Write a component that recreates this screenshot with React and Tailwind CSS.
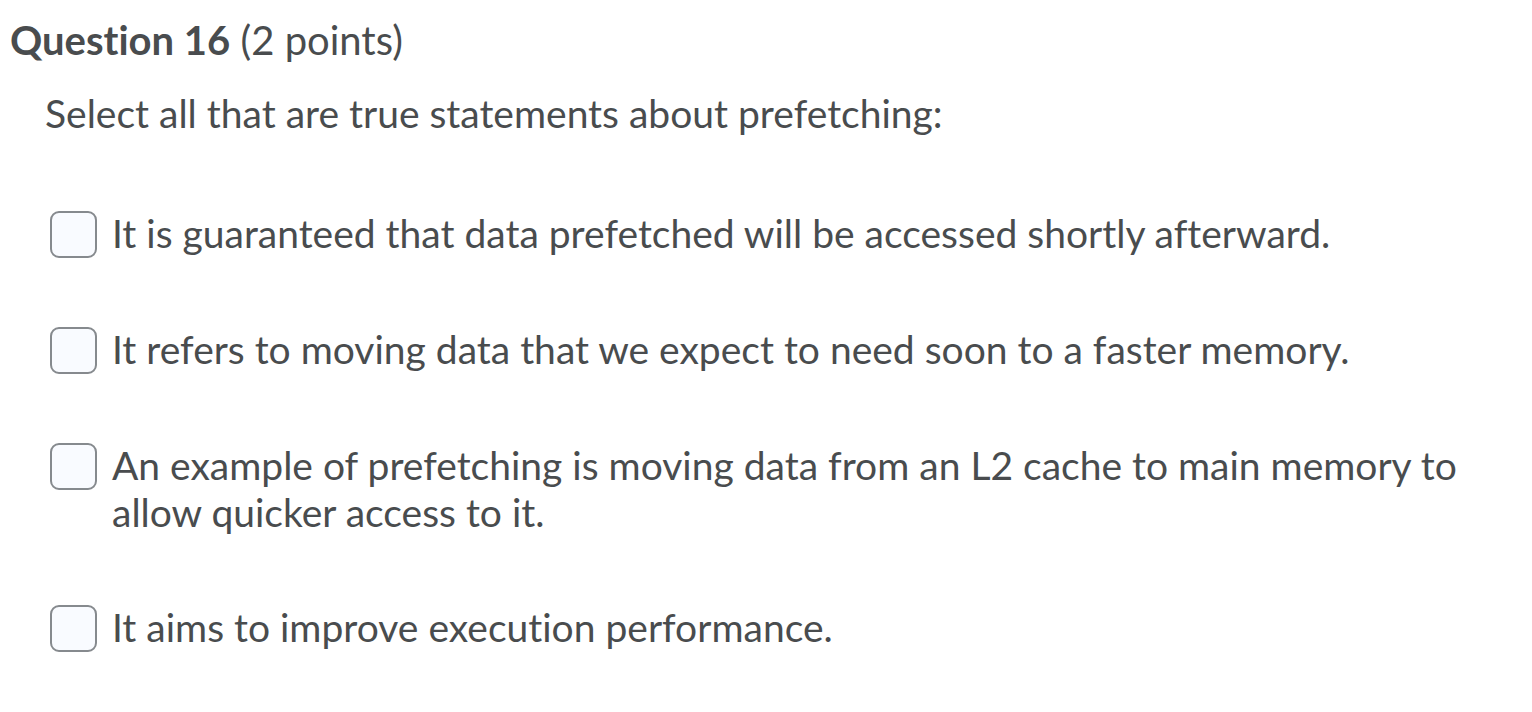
import React from "react";

const options = [
  "It is guaranteed that data prefetched will be accessed shortly afterward.",
  "It refers to moving data that we expect to need soon to a faster memory.",
  "An example of prefetching is moving data from an L2 cache to main memory to allow quicker access to it.",
  "It aims to improve execution performance.",
];

export default function App() {
  return (
    <div className="min-h-screen bg-white text-[#494c4e] font-['Lato',sans-serif] [font-variant-ligatures:none]">
      <div className="pl-[10px] pt-[17px]">
        <h1 className="text-[40px] leading-[47px]">
          <span className="font-bold">Question 16</span> (2 points)
        </h1>
        <div className="pl-[35px] pt-[26px]">
          <p className="text-[39px] leading-[47px]">Select all that are true statements about prefetching:</p>
          <div className="mt-[73px] flex flex-col gap-[68px] pl-[5px]">
            {options.map((o) => (
              <label key={o} className="flex items-start gap-[15px]">
                <span className="mt-[1px] w-[47px] h-[47px] shrink-0 rounded-[9px] border-2 border-[#868a8e] bg-[#f9fbff]" />
                <span className="text-[39px] leading-[47px] max-w-[1380px]">{o}</span>
              </label>
            ))}
          </div>
        </div>
      </div>
    </div>
  );
}
